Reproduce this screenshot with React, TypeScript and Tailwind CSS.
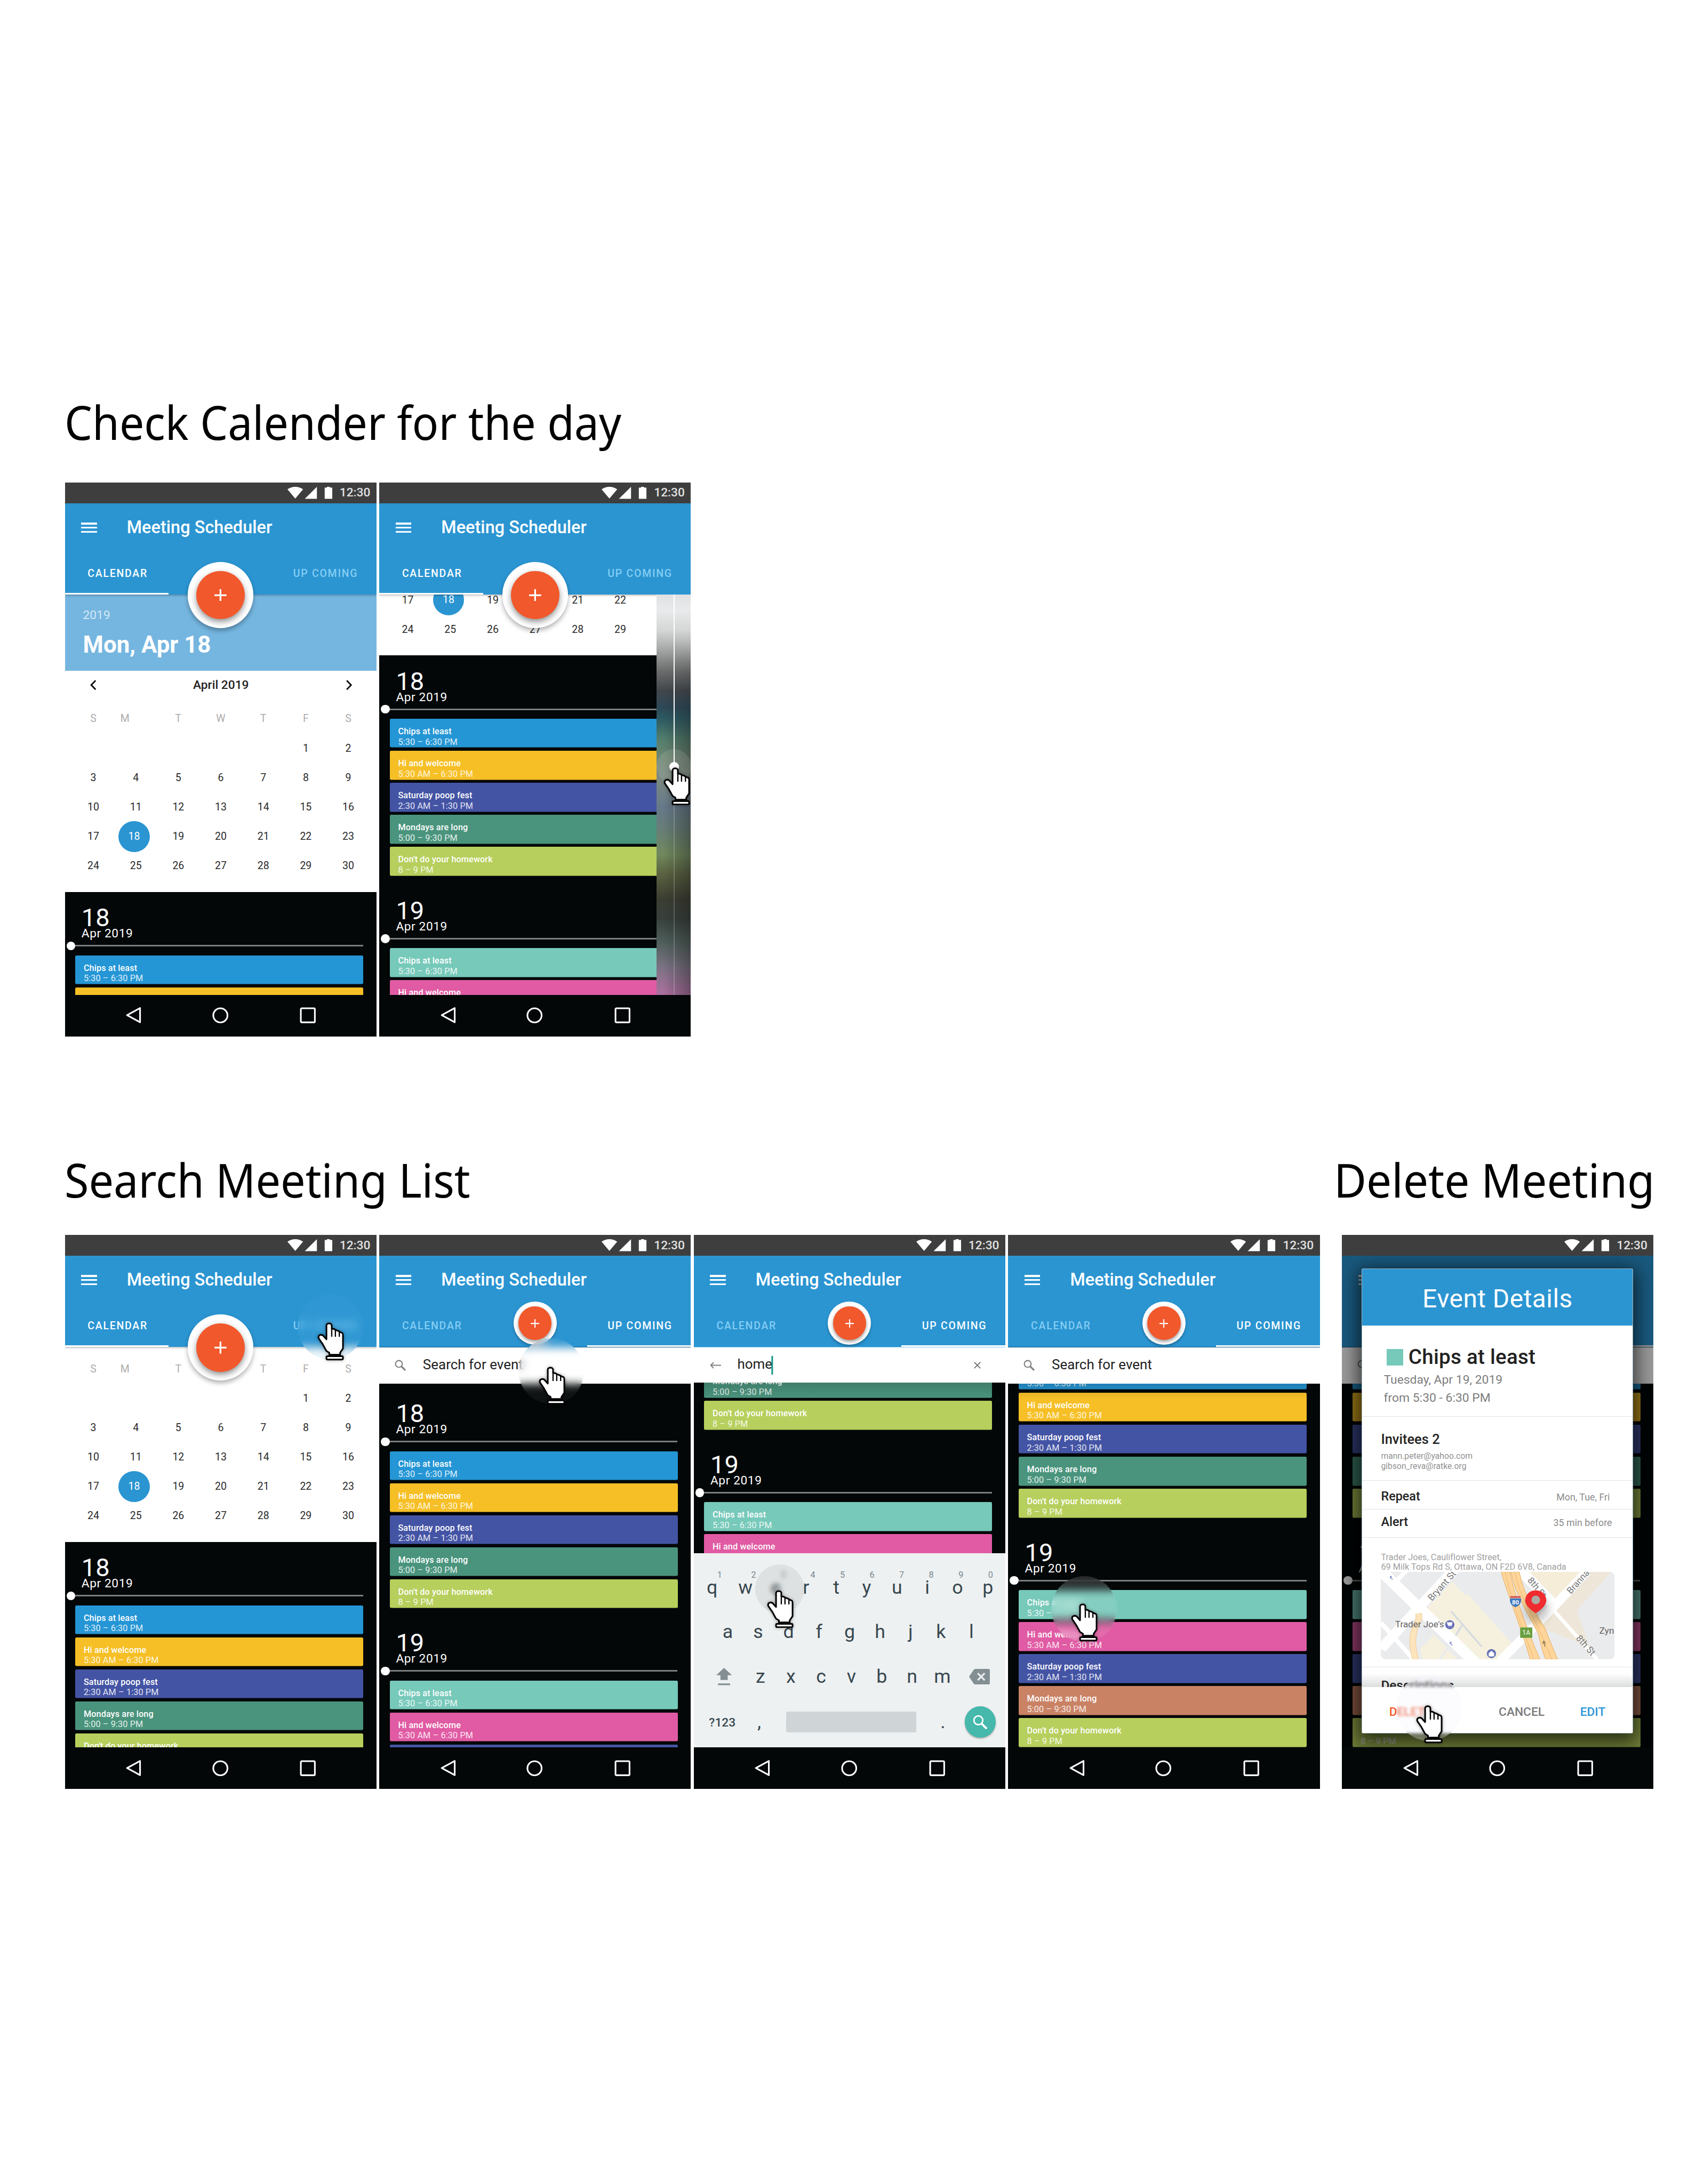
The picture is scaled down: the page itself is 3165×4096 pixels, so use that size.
import React from "react";

type EventItem = { title: string; time: string; color: string };

const DAY_18: EventItem[] = [
  { title: "Chips at least", time: "5:30 – 6:30 PM", color: "bg-[#2596d5]" },
  { title: "Hi and welcome", time: "5:30 AM – 6:30 PM", color: "bg-[#f6bf26]" },
  { title: "Saturday poop fest", time: "2:30 AM – 1:30 PM", color: "bg-[#4454a5]" },
  { title: "Mondays are long", time: "5:00 – 9:30 PM", color: "bg-[#4a947d]" },
  { title: "Don't do your homework", time: "8 – 9 PM", color: "bg-[#b7cf5d]" },
];

const DAY_19: EventItem[] = [
  { title: "Chips at least", time: "5:30 – 6:30 PM", color: "bg-[#77c9ba]" },
  { title: "Hi and welcome", time: "5:30 AM – 6:30 PM", color: "bg-[#e05ba3]" },
  { title: "Saturday poop fest", time: "2:30 AM – 1:30 PM", color: "bg-[#4454a5]" },
  { title: "Mondays are long", time: "5:00 – 9:30 PM", color: "bg-[#ca8265]" },
  { title: "Don't do your homework", time: "8 – 9 PM", color: "bg-[#b7cf5d]" },
];

/* Which cards of a day carry their text: [first, last + 1]. */
type Range = [number, number];

function StatusBar() {
  return (
    <div className="relative z-30 flex h-[24px] shrink-0 items-center bg-[#3e3e3e] pl-[257px]">
      <svg className="h-[14px] w-[52px]" viewBox="0 0 52 14" fill="#fff">
        <path d="M0 3C5-1 13-1 18 3L9 13.6Z" />
        <path d="M20 13.8 34 0V13.8Z" />
        <path d="M43 .9h2.6V0h3.4v.9h2.8v12.9H43Z" />
      </svg>
      <span className="ml-[8.4px] pt-[0.6px] text-[14px] leading-[24px] font-medium text-white/85">12:30</span>
    </div>
  );
}

function Header({ active, line, bare }: { active: "calendar" | "upcoming"; line?: boolean; bare?: boolean }) {
  const cal = active === "calendar";
  return (
    <div
      className={
        "relative z-10 h-[105.2px] shrink-0 bg-[#2b95d2] text-white " +
        (line ? "" : "shadow-[0_1px_2px_rgba(0,0,0,0.25)]")
      }
    >
      <div className="flex h-[56px] items-center pt-[0.4px] pl-[19px]">
        <div className="flex flex-col gap-[2.8px]">
          <div className="h-[2px] w-[18px] bg-white" />
          <div className="h-[2px] w-[18px] bg-white" />
          <div className="h-[2px] w-[18px] bg-white" />
        </div>
        {!bare && (
          <span className="ml-[34.6px] text-[20px] leading-[24px] font-medium tracking-[0.02px]">
            Meeting Scheduler
          </span>
        )}
      </div>
      <div className="flex h-[49.2px] items-end justify-between text-[12px] leading-[50px] font-medium tracking-[1.08px]">
        <div
          className={
            "h-[49.2px] w-[120px] pl-[26.4px] " + (cal ? "border-b-2 border-white" : "text-[#83cdf3]")
          }
        >
          {!bare && "CALENDAR"}
        </div>
        <div
          className={
            "h-[49.2px] w-[120px] pl-[23.8px] " + (cal ? "text-[#83cdf3]" : "border-b-2 border-white")
          }
        >
          {!bare && "UP COMING"}
        </div>
      </div>
    </div>
  );
}

function Fab({ small }: { small?: boolean }) {
  if (small) {
    return (
      <div className="absolute top-[77px] left-[155px] z-20 flex h-[50px] w-[50px] items-center justify-center rounded-full bg-white shadow-[0_2px_3px_rgba(0,0,0,0.25)]">
        <div className="flex h-[38.5px] w-[38.5px] items-center justify-center rounded-full bg-[#f1582c] shadow-[0_2px_4px_rgba(0,0,0,0.4)]">
          <svg className="h-[10px] w-[10px]" viewBox="0 0 10 10" stroke="#fff" strokeWidth="1.3">
            <path d="M5 0V10M0 5H10" />
          </svg>
        </div>
      </div>
    );
  }
  return (
    <div className="absolute top-[92px] left-[142px] z-20 flex h-[76px] w-[76px] items-center justify-center rounded-full bg-white shadow-[0_3px_5px_rgba(0,0,0,0.3)]">
      <div className="flex h-[56px] w-[56px] items-center justify-center rounded-full bg-[#f1582c] shadow-[0_3px_7px_rgba(0,0,0,0.45)]">
        <svg className="h-[14px] w-[14px]" viewBox="0 0 14 14" stroke="#fff" strokeWidth="2">
          <path d="M7 0V14M0 7H14" />
        </svg>
      </div>
    </div>
  );
}

function NavBar() {
  return (
    <div className="relative z-30 flex h-[48px] shrink-0 items-center justify-between bg-[#030708] pr-[69px] pl-[70px]">
      <svg className="h-[20px] w-[19px]" viewBox="0 0 19 20" fill="none" stroke="#fff" strokeWidth="1.9" strokeLinejoin="round">
        <path d="M17 1.6V18L2 9.8Z" />
      </svg>
      <svg className="-ml-[1px] h-[20px] w-[20px]" viewBox="0 0 20 20" fill="none" stroke="#fff" strokeWidth="1.9">
        <circle cx="10" cy="10" r="8.2" />
      </svg>
      <svg className="h-[20px] w-[20px]" viewBox="0 0 20 20" fill="none" stroke="#fff" strokeWidth="1.9">
        <rect x="1.9" y="1.9" width="16.2" height="16.2" rx="1" />
      </svg>
    </div>
  );
}

function Hand({ className }: { className: string }) {
  return (
    <svg
      className={"absolute z-40 h-[44px] w-[31px] drop-shadow-[0_0_2px_rgba(0,0,0,0.35)] " + className}
      viewBox="103 97 233 332"
      fill="#fff"
      stroke="#000"
      strokeWidth="14"
      strokeLinejoin="round"
    >
      <path d="M182 245V124C182 100 228 100 228 124V152L248 155 265 165 285 172 302 182 318 188C324 192 326 198 326 206V325L301 362V380H207V362L182 347 146 282 114 236C106 204 142 196 160 220Z" />
      <path d="M228 150V222M260 165V222M294 180V222" strokeWidth="11" />
      <rect x="182" y="392" width="144" height="29" rx="9" />
    </svg>
  );
}

function Halo({ className }: { className: string }) {
  return <div className={"absolute z-30 rounded-full " + className} />;
}

const WEEKDAYS = ["S", "M", "T", "W", "T", "F", "S"];
const DAYS = ["", "", "", "", "", ...Array.from({ length: 30 }, (_, i) => String(i + 1))];

function DateBanner() {
  return (
    <>
      <div className="h-[88px] bg-[#75b6e0] pt-[16px] pl-[21px] text-white">
        <div className="text-[14px] leading-[16px] text-white/70">2019</div>
        <div className="mt-[8px] text-[27px] leading-[36px] font-bold">Mon, Apr 18</div>
      </div>
      <div className="flex h-[33px] items-center justify-between pr-[28.3px] pl-[29px]">
        <svg className="h-[12px] w-[7px]" viewBox="0 0 7 12" fill="none" stroke="#111" strokeWidth="1.8">
          <path d="M6.3.8 1.3 6 6.3 11.2" />
        </svg>
        <span className="text-[14px] leading-[33px] font-medium text-[#222]">April 2019</span>
        <svg className="h-[12px] w-[7px]" viewBox="0 0 7 12" fill="none" stroke="#111" strokeWidth="1.8">
          <path d="M.7.8 5.7 6 .7 11.2" />
        </svg>
      </div>
    </>
  );
}

/* The month; `firstDay` drops the labels of rows that are scrolled away, `cols` those of covered columns. */
function Calendar({ banner, firstDay, cols }: { banner: boolean; firstDay: number; cols: number }) {
  return (
    <div className="flex h-[343.8px] flex-col justify-end bg-white pb-[13.100px]">
      {banner && <DateBanner />}
      <div className="mt-[5.7px] grid grid-cols-7 pr-[8px] pl-[8.4px] text-center text-[12px] leading-[34px] text-[#2a2a2a]">
        {firstDay === 0 &&
          WEEKDAYS.map((d, i) => (
            <div key={"w" + i} className={"text-[#acacac] " + (i === 1 ? "-translate-x-[12.5px]" : "")}>
              {d}
            </div>
          ))}
        {DAYS.map((d, i) => {
          if (i + 5 < firstDay) return null;
          if (d === "18")
            return (
              <div key={i} className="-mt-[1px] -mb-[1px] ml-[4.6px] h-[36px] w-[36px] rounded-full bg-[#2b95d2] leading-[36px] text-white">
                {d}
              </div>
            );
          return (
            <div key={i} className="h-[34px]">
              {i % 7 < cols ? d : ""}
            </div>
          );
        })}
      </div>
    </div>
  );
}

function DaySection({
  day,
  events,
  range,
  heading = true,
  timeOnly,
}: {
  day: string;
  events: EventItem[];
  range: Range;
  heading?: boolean;
  timeOnly?: boolean;
}) {
  return (
    <div className="flex h-[265px] shrink-0 flex-col bg-[#030708] text-white">
      <div className="mt-[13.8px] h-[32px] pl-[19.3px] text-[29px] leading-[32px]">{heading && day}</div>
      <div className="-mt-[5.6px] h-[16px] pl-[19.3px] text-[14px] leading-[16px] tracking-[0.35px]">
        {heading && "Apr 2019"}
      </div>
      <div className="flex h-[12px] items-center pl-[2px]">
        <div className="h-[10px] w-[10px] rounded-full bg-white" />
        <div className="h-[1.8px] w-[332.6px] bg-[#7c7d7d]" />
      </div>
      <div className="mt-[5px] ml-[12px] flex w-[332.8px] flex-col gap-[3.5px]">
        {events.map((e, i) => (
          <div
            key={e.title}
            className={
              "h-[33.5px] rounded-[1.5px] border-b border-black/40 pt-[8.6px] pl-[9.8px] text-[10px] leading-[12px] " +
              e.color
            }
          >
            {i >= range[0] && i < range[1] && (
              <>
                <div className="h-[12px] font-medium tracking-[0.07px]">{!timeOnly && e.title}</div>
                <div className="tracking-[0.08px] text-white/85">{e.time}</div>
              </>
            )}
          </div>
        ))}
      </div>
    </div>
  );
}

function Phone({ children }: { children: React.ReactNode }) {
  return (
    <div className="relative flex h-[639.8px] w-[360px] shrink-0 flex-col overflow-hidden bg-[#030708] [zoom:1.6233]">
      {children}
    </div>
  );
}

function CalendarPhone({
  offset,
  banner = false,
  firstDay = 0,
  cols = 7,
  first,
  second,
  children,
}: {
  offset: string;
  banner?: boolean;
  firstDay?: number;
  cols?: number;
  first: Range;
  second?: Range;
  children?: React.ReactNode;
}) {
  return (
    <Phone>
      <StatusBar />
      <Header active="calendar" />
      <div className="relative min-h-0 flex-1 overflow-hidden">
        <div className={offset}>
          <Calendar banner={banner} firstDay={firstDay} cols={cols} />
          <DaySection day="18" events={DAY_18} range={first} />
          {second && <DaySection day="19" events={DAY_19} range={second} />}
        </div>
      </div>
      <Fab />
      {children}
      <NavBar />
    </Phone>
  );
}

function SearchIcon({ className }: { className: string }) {
  return (
    <svg className={className} viewBox="0 0 13 13" fill="none" stroke="currentColor">
      <circle cx="4.9" cy="4.9" r="3.9" strokeWidth="1.3" />
      <path d="M7.8 7.8 12.3 12.3" strokeWidth="1.9" />
    </svg>
  );
}

function SearchBar({ label }: { label: string }) {
  return (
    <div className="relative z-10 flex h-[42.6px] shrink-0 items-center border-t-[0.6px] border-[#0f5784] bg-white pl-[18px]">
      <SearchIcon className="h-[13px] w-[13px] text-[#808080]" />
      <span className="ml-[19.4px] -mt-[1.600px] text-[16px] leading-[20px] text-[#222]">{label}</span>
    </div>
  );
}

function UpcomingPhone({
  offset,
  first,
  second,
  firstHeading = true,
  shade,
  covered,
  children,
}: {
  offset: string;
  first: Range;
  second: Range;
  firstHeading?: boolean;
  shade?: boolean;
  covered?: boolean;
  children?: React.ReactNode;
}) {
  return (
    <Phone>
      <StatusBar />
      <Header active="upcoming" line bare={covered} />
      <SearchBar label={covered ? "" : "Search for event"} />
      <div className="relative min-h-0 flex-1 overflow-hidden">
        <div className={offset}>
          <DaySection day="18" events={DAY_18} range={first} heading={firstHeading} />
          <DaySection day="19" events={DAY_19} range={second} timeOnly={covered} />
        </div>
        {shade && (
          <div className="absolute inset-x-0 top-0 h-[18px] bg-gradient-to-b from-black/15 to-transparent" />
        )}
      </div>
      {!covered && <Fab small />}
      {children}
      <NavBar />
    </Phone>
  );
}

function Keyboard() {
  const numbers = ["1", "2", "3", "4", "5", "6", "7", "8", "9", "0"];
  return (
    <div className="relative z-10 flex h-[224.2px] shrink-0 flex-col bg-[#eef1f2] text-center text-[22px] leading-[26px] text-[#37474f]">
      <div className="mt-[18.9px] flex pl-[17.9px] text-[10px] leading-[12px] text-[#78868c]">
        {numbers.map((n) => (
          <div key={n} className={"w-[34.6px] " + (n === "1" ? "-translate-x-[5px]" : "")}>
            {n}
          </div>
        ))}
      </div>
      <div className="-mt-[4.4px] flex pl-[7.300px]">
        {"qwertyuiop".split("").map((k) => (
          <div key={k} className={"w-[35px] " + (k === "q" ? "-translate-x-[3.5px]" : "")}>
            {k}
          </div>
        ))}
      </div>
      <div className="mt-[25.1px] flex pl-[21.7px]">
        {"asdfghjkl".split("").map((k) => (
          <div key={k} className="w-[35.2px]">
            {k}
          </div>
        ))}
      </div>
      <div className="mt-[26px] flex items-center pl-[26px]">
        <svg className="mr-[15.700px] h-[20px] w-[18px]" viewBox="0 0 18 20" fill="#838f93">
          <path d="M9 0 18 8.4H13.2V14H4.8V8.4H0Z" />
          <path d="M2 18H16V20H2Z" />
        </svg>
        {"zxcvbnm".split("").map((k) => (
          <div key={k} className="w-[35px]">
            {k}
          </div>
        ))}
        <svg className="ml-[13.5px] h-[18px] w-[24px]" viewBox="0 0 24 18" fill="#838f93">
          <path d="M7 0H22.5Q24 0 24 1.5V16.5Q24 18 22.5 18H7Q6 18 5.3 17L0 9 5.3 1Q6 0 7 0Z" />
          <path d="M10 5 18 13M18 5 10 13" stroke="#eef1f2" strokeWidth="1.9" />
        </svg>
      </div>
      <div className="mt-[21.4px] flex h-[36px] items-center pl-[17.7px]">
        <div className="w-[40px] pt-[1.500px] text-left text-[14px] font-medium">?123</div>
        <div className="w-[36px]">,</div>
        <div className="ml-[13.3px] h-[24px] w-[150px] rounded-[2px] bg-[#cfd4d6]" />
        <div className="w-[56px] pl-[6px]">.</div>
        <div className="flex h-[36px] w-[36px] items-center justify-center rounded-full bg-[#46b8ac] text-white shadow-[0_1px_2px_rgba(0,0,0,0.3)]">
          <SearchIcon className="h-[17px] w-[17px]" />
        </div>
      </div>
    </div>
  );
}

function TypingPhone() {
  return (
    <Phone>
      <StatusBar />
      <Header active="upcoming" line />
      <div className="relative z-10 flex h-[41.6px] shrink-0 items-center border-t-[0.6px] border-[#7cc4ec] bg-white pl-[18.6px]">
        <svg className="h-[8px] w-[13px]" viewBox="0 0 13 8" fill="none" stroke="#808080" strokeWidth="1.2">
          <path d="M4.4.5 1 4 4.4 7.5M1 4H13" />
        </svg>
        <span className="ml-[18.8px] -mt-[1.800px] text-[16px] leading-[20px] text-[#222]">home</span>
        <div className="h-[21.5px] w-[2px] -translate-x-px bg-[#159688]" />
        <svg className="ml-[230.600px] h-[8px] w-[8px]" viewBox="0 0 8 8" fill="none" stroke="#777" strokeWidth="1.2">
          <path d="M.5.5 7.5 7.5M7.5.5.5 7.5" />
        </svg>
      </div>
      <div className="relative min-h-0 flex-1 overflow-hidden">
        <div className="-mt-[200.2px]">
          <DaySection day="18" events={DAY_18} range={[3, 5]} heading={false} />
          <DaySection day="19" events={DAY_19} range={[0, 2]} />
        </div>
        <div className="absolute inset-x-0 top-0 h-[18px] bg-gradient-to-b from-black/15 to-transparent" />
      </div>
      <Fab small />
      <Keyboard />
      <Halo className="top-[380.5px] left-[71px] h-[57px] w-[57px] bg-[#888]/15 backdrop-blur-[2.500px]" />
      <Hand className="top-[410px] left-[84.8px]" />
      <NavBar />
    </Phone>
  );
}

function MapView() {
  return (
    <svg className="h-[101px] w-[270px] rounded-[6px]" viewBox="0 0 270 101">
      <rect width="270" height="101" fill="#eaebed" />
      <g transform="scale(.1803 .1331) translate(-33 -30)">
        <path d="M490 115 575 235 590 222 870 645 780 790H630L330 345Z" fill="#f6f1de" />
        <path d="M373 578 455 690 400 790H300L285 690 310 668ZM463 708 515 775 505 790H415Z" fill="#f6f1de" />
        <path d="M975 30H1310L1145 275Z" fill="#f5edd8" />
        <path d="M1375 30H1510L1290 360 1370 680 1085 530 1060 430 1165 350Z" fill="#eee6d8" />
        <path d="M482 370 680 680M560 480 505 600" stroke="#d5dae0" strokeWidth="12" fill="none" />
        <path d="M33 20 640 820" stroke="#fff" strokeWidth="82" fill="none" />
        <path d="M33 700 280 335 510 0" stroke="#fff" strokeWidth="72" fill="none" />
        <path d="M120 130 195 20M33 470 250 800" stroke="#fff" strokeWidth="32" fill="none" />
        <path d="M800 800 1150 320 1350 30" stroke="#fff" strokeWidth="66" fill="none" />
        <path d="M930 20 1145 320" stroke="#fff" strokeWidth="78" fill="none" />
        <path d="M1145 370 1425 800" stroke="#fff" strokeWidth="26" fill="none" />
        <path d="M275 390C290 480 235 480 238 650 240 720 250 760 258 800" stroke="#efcf97" strokeWidth="42" fill="none" />
        <path d="M275 390C290 480 235 480 238 650 240 720 250 760 258 800" stroke="#fde4bd" strokeWidth="34" fill="none" />
        <path d="M804 30H860C885 200 960 500 1052 790H990C930 500 850 250 804 30Z" fill="#fed59a" stroke="#e9b56d" strokeWidth="4" />
        <path d="M866 30H920C950 230 1020 380 1085 520 1110 610 1135 690 1166 790H1090C1060 700 1050 600 1040 560 950 330 900 230 866 30Z" fill="#fed59a" stroke="#e9b56d" strokeWidth="4" />
        <path d="M830 30C860 250 950 550 1015 790M892 30C920 240 1010 420 1060 570 1085 650 1110 720 1128 790" stroke="#eebc78" strokeWidth="4" fill="none" />
      </g>
      <g fontFamily="Roboto, sans-serif" fill="#757575" fontSize="10.5">
        <text transform="translate(59 34) rotate(-48)">Bryant St</text>
        <text transform="translate(219.5 26) rotate(-48)">Branna</text>
        <text transform="translate(169 10) rotate(50)">8th St</text>
        <text transform="translate(225 77) rotate(48)">8th St</text>
        <text x="16.6" y="64" fill="#5f5f5f" textLength="56.5">Trader Joe's</text>
        <text x="252.5" y="71.6" fill="#5f5f5f">Zyn</text>
      </g>
      <circle cx="79.7" cy="61" r="5.3" fill="#6670b8" />
      <path d="M76.5 58.5H82.5L81.7 62H77.8ZM78 63.4h1M81 63.4h1" fill="#fff" stroke="#fff" strokeWidth=".6" />
      <circle cx="127.8" cy="94.4" r="5.3" fill="#6670b8" />
      <path d="M125 93.5H130.6V97.4H125ZM126.4 93.5a1.4 1.8 0 0 1 2.8 0" fill="#fff" stroke="#fff" strokeWidth=".6" />
      <path d="M13.6 9 11 5.5M11 7.5V5.3L13 5.3M82.5 85 80 81.5M80 83.5V81.3H82" stroke="#8f97cf" strokeWidth="1" fill="none" />
      <path d="M189.5 86.5 188.2 80M187 83 188.2 80 190.4 82.5" stroke="#8f7a5a" strokeWidth="1" fill="none" />
      <path d="M149.5 28H161.5V30H149.5Z" fill="#d0525c" />
      <path d="M149.2 30.6H162C162.6 36 160 39 155.6 40.8 151 39 148.6 36 149.2 30.6Z" fill="#3f78bf" />
      <text x="155.6" y="37.6" textAnchor="middle" fontFamily="Roboto, sans-serif" fontSize="7" fontWeight="700" fill="#fff">80</text>
      <rect x="161" y="64.2" width="14" height="12" fill="#689f3f" />
      <text x="168" y="73" textAnchor="middle" fontFamily="Roboto, sans-serif" fontSize="7.5" fill="#fff">1A</text>
      <ellipse cx="180" cy="43" rx="14" ry="15" fill="#000" opacity=".22" className="blur-[5px]" />
      <path
        d="M179 21.2C172 21.2 166.8 26.4 166.8 33 166.8 38 172 43.500 179 47.700 186 43.500 191.200 38 191.200 33 191.200 26.400 186 21.200 179 21.200Z"
        fill="#ee2b2e"
      />
      <circle cx="179" cy="32.4" r="5" fill="#aeaba6" />
    </svg>
  );
}

function EventModal() {
  return (
    <div className="absolute top-[39px] left-[23px] z-20 flex h-[537px] w-[313.6px] flex-col overflow-hidden rounded-[2px] border-[0.6px] border-[#9fb4bd] bg-white">
      <div className="h-[65px] shrink-0 bg-[#2b95d2] text-center text-[29.5px] leading-[69px] tracking-[0.300px] text-white">
        Event Details
      </div>
      <div className="h-[105.4px] shrink-0 border-b border-[#e2e2e2] pt-[26.5px] pl-[24.7px]">
        <div className="flex items-center">
          <div className="ml-[3.5px] h-[19px] w-[19px] bg-[#77c9ba]" />
          <span className="ml-[6px] text-[23.8px] leading-[20px] font-medium tracking-[0.150px] text-[#222]">Chips at least</span>
        </div>
        <div className="mt-[6px] text-[14.1px] leading-[21px] text-[#7e7e7e]">
          <div>Tuesday, Apr 19, 2019</div>
          <div>from 5:30 - 6:30 PM</div>
        </div>
      </div>
      <div className="h-[74px] shrink-0 border-b border-[#e2e2e2] pt-[16px] pl-[21.6px]">
        <div className="text-[15.700px] leading-[20px] font-medium text-[#222]">Invitees 2</div>
        <div className="mt-[4.2px] text-[9.700px] leading-[11.3px] text-[#929292]">
          <div>mann.peter@yahoo.com</div>
          <div>gibson_reva@ratke.org</div>
        </div>
      </div>
      <div className="flex h-[33px] shrink-0 items-center justify-between border-b border-[#e2e2e2] pt-[4px] pr-[26.5px] pl-[21.6px]">
        <span className="text-[14.4px] leading-[16px] font-medium text-[#222]">Repeat</span>
        <span className="pt-[2px] text-[11px] leading-[16px] text-[#8c8c8c]">Mon, Tue, Fri</span>
      </div>
      <div className="flex h-[33px] shrink-0 items-center justify-between border-b border-[#e2e2e2] pr-[24px] pb-[3px] pl-[21.6px]">
        <span className="text-[14.4px] leading-[16px] font-medium text-[#222]">Alert</span>
        <span className="pt-[2px] text-[11px] leading-[16px] text-[#8c8c8c]">35 min before</span>
      </div>
      <div className="h-[149.3px] shrink-0 border-b border-[#e2e2e2] pt-[17px] pl-[21.6px]">
        <div className="text-[10px] leading-[11px] tracking-[0.030px] text-[#a0a0a0]">
          <div>Trader Joes, Cauliflower Street,</div>
          <div>69 Milk Tops Rd S, Ottawa, ON F2D 6V8, Canada</div>
        </div>
        <MapView />
      </div>
      <div className="h-[22.8px] shrink-0 overflow-hidden bg-gradient-to-b from-white from-30% to-[#dcdddd] pt-[11.600px] pl-[21.6px] text-[15px] leading-[20px] font-medium text-[#222]">
        Descriptions
      </div>
      <div className="relative flex flex-1 items-center bg-white pt-[5px] text-[14px] font-medium">
        <span className="ml-[31px] w-[126.5px] text-[#f1582c]">DELETE</span>
        <span className="w-[94px] text-[#7a7a7a]">CANCEL</span>
        <span className="text-[#2b97d6]">EDIT</span>
      </div>
    </div>
  );
}

function DeletePhone() {
  return (
    <UpcomingPhone offset="-mt-[99.7px]" first={[0, 0]} firstHeading={false} second={[4, 5]} covered>
      <div className="absolute inset-x-0 top-[24px] z-20 h-[568px] overflow-hidden bg-black/40">
        <div className="absolute top-[15px] left-[23px] h-[537px] w-[313.6px] shadow-[0_5px_20px_4px_rgba(0,0,0,0.65)]" />
      </div>
      <EventModal />
      <Halo className="top-[508.6px] left-[62.8px] h-[76px] w-[76px] bg-[#f4f6ff]/30 backdrop-blur-[1.5px]" />
      <Hand className="top-[543.3px] left-[85.6px]" />
    </UpcomingPhone>
  );
}

function ScrollStrip() {
  return (
    <div className="absolute top-[129.2px] left-[320.4px] z-10 h-[463px] w-[39.6px] overflow-hidden bg-[linear-gradient(180deg,#dfe1e2_0%,#e9eaeb_4%,#d4d5d5_9%,#a3a4a4_14%,#6d6e6e_19%,#42474c_24%,#2e4856_28%,#2c5a63_31%,#527d6d_36%,#708773_41%,#7c8a82_46%,#66798a_53%,#687f76_59%,#71895c_65%,#596140_70%,#3c3e32_76%,#37403c_81%,#50605c_87%,#7b7384_93%,#ad6fa0_100%)]">
      <div className="absolute inset-0 bg-[linear-gradient(90deg,transparent_20%,rgba(25,25,25,0.4))] [mask-image:linear-gradient(180deg,transparent_12%,black_34%)]" />
      <div className="absolute top-0 left-[19.4px] h-[463px] w-[1.300px] bg-white/20" />
      <div className="absolute top-0 left-[19.4px] h-[198px] w-[1.300px] bg-white" />
      <div className="absolute top-[178.8px] left-0 h-[40px] w-[40px] rounded-full bg-white/10" />
      <div className="absolute top-[193.5px] left-[14.6px] h-[11px] w-[11px] rounded-full bg-white" />
    </div>
  );
}

function Title({ children, className }: { children: string; className: string }) {
  return (
    <h2
      className={
        "h-[100px] w-0 origin-left font-['Noto_Sans','Open_Sans',sans-serif] text-[87px] leading-[100px] whitespace-nowrap text-black " +
        className
      }
    >
      {children}
    </h2>
  );
}

export default function App() {
  return (
    <main className="h-[4096px] w-[3165px] overflow-hidden bg-white pt-[741px] pl-[121.5px] font-[Roboto,sans-serif]">
      <section>
        <Title className="mb-[64px] -ml-[1px] scale-x-[0.946]">Check Calender for the day</Title>
        <div className="flex gap-[5.2px]">
          <CalendarPhone offset="" banner first={[0, 1]} />
          <CalendarPhone offset="-mt-[273.2px]" firstDay={19} cols={6} first={[0, 5]} second={[0, 2]}>
            <ScrollStrip />
            <Hand className="top-[329px] left-[328.2px]" />
          </CalendarPhone>
        </div>
      </section>

      <div className="mt-[218.2px] flex">
        <section>
          <Title className="mb-[54.4px] -ml-[1px] scale-x-[0.951]">Search Meeting List</Title>
          <div className="flex gap-[5.2px]">
            <CalendarPhone offset="-mt-[118.3px]" first={[0, 5]}>
              <Halo className="top-[68px] left-[269px] h-[76px] w-[76px] bg-[#5ab4e6]/10 backdrop-blur-[5px]" />
              <Hand className="top-[101px] left-[291.6px]" />
            </CalendarPhone>
            <UpcomingPhone offset="mt-[4.8px]" first={[0, 5]} second={[0, 2]}>
              <Halo className="top-[119.3px] left-[161px] h-[76px] w-[76px] bg-white/5 backdrop-blur-[5px]" />
              <Hand className="top-[152px] left-[184px]" />
            </UpcomingPhone>
            <TypingPhone />
            <UpcomingPhone offset="-mt-[99.7px]" first={[0, 5]} firstHeading={false} second={[0, 5]} shade>
              <Halo className="top-[394.2px] left-[50px] h-[76px] w-[76px] bg-white/10 backdrop-blur-[5px]" />
              <Hand className="top-[425.8px] left-[72.8px]" />
            </UpcomingPhone>
          </div>
        </section>
        <section className="ml-[41.5px]">
          <Title className="mb-[54.4px] -ml-[15.500px] scale-x-[0.962]">Delete Meeting</Title>
          <DeletePhone />
        </section>
      </div>
    </main>
  );
}
